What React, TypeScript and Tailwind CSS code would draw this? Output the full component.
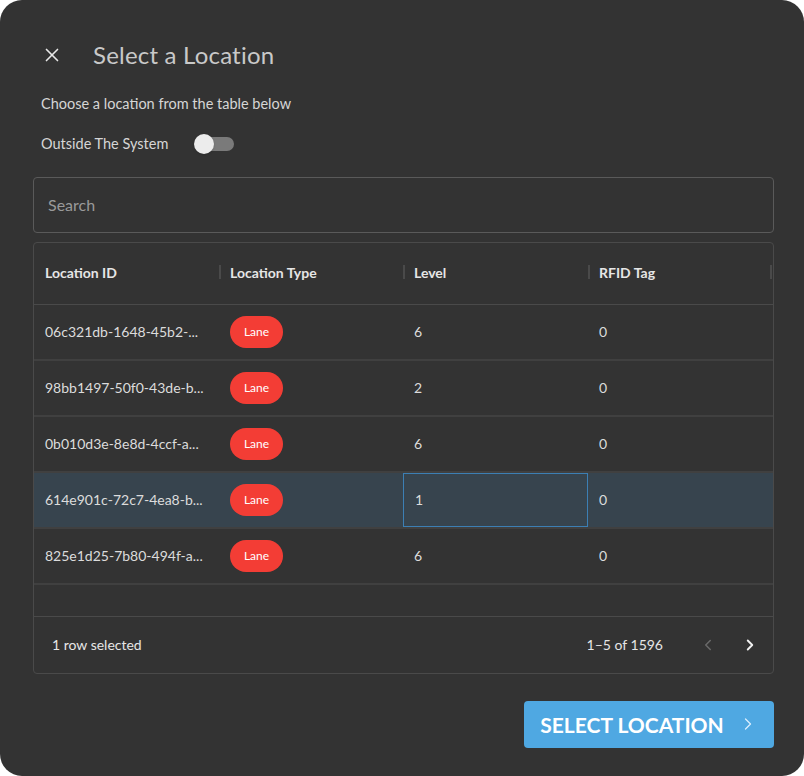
import { X, ChevronLeft, ChevronRight } from 'lucide-react';

type Row = { id: string; type: string; level: string; rfid: string };

const rows: Row[] = [
  { id: '06c321db-1648-45b2-...', type: 'Lane', level: '6', rfid: '0' },
  { id: '98bb1497-50f0-43de-b...', type: 'Lane', level: '2', rfid: '0' },
  { id: '0b010d3e-8e8d-4ccf-a...', type: 'Lane', level: '6', rfid: '0' },
  { id: '614e901c-72c7-4ea8-b...', type: 'Lane', level: '1', rfid: '0' },
  { id: '825e1d25-7b80-494f-a...', type: 'Lane', level: '6', rfid: '0' },
];

const SELECTED = 3;

function HeaderCell({ label, first }: { label: string; first?: boolean }) {
  return (
    <div className="relative flex items-center h-full px-[11px] pb-[2px]">
      {!first && <span className="absolute left-0 top-[22px] h-[14px] w-[2px] bg-[#4a4a4a]" />}
      <span className="text-[14px] font-bold text-[#e6e6e6]">{label}</span>
    </div>
  );
}

export default function App() {
  return (
    <div className="w-[804px] h-[776px] bg-white" style={{ fontFamily: 'Lato, "Noto Sans", sans-serif' }}>
      <div className="w-full h-full rounded-[22px] bg-[#333333] pl-[33px] pr-[30px] pt-[38px] flex flex-col">
        <div className="flex items-center h-[34px] pl-[8px]">
          <X className="w-[22px] h-[22px] text-[#e8e8e8]" strokeWidth={1.8} />
          <h1 className="ml-[30px] text-[24px] text-[#c9c9c9] tracking-[0.2px]">Select a Location</h1>
        </div>
        <p className="mt-[21px] pl-[8px] text-[14.5px] text-[#d6d6d6]">Choose a location from the table below</p>
        <div className="mt-[18px] pl-[8px] flex items-center h-[22px]">
          <span className="text-[14.5px] text-[#d6d6d6]">Outside The System</span>
          <div className="relative ml-[26px] w-[41px] h-[20px] flex items-center">
            <div className="ml-[6px] w-[34px] h-[14px] rounded-full bg-[#7a7a7a]" />
            <div className="absolute left-0 top-0 w-[20px] h-[20px] rounded-full bg-[#ececec] shadow" />
          </div>
        </div>
        <div className="mt-[22px] h-[56px] rounded-[4px] border border-[#5a5a5a] flex items-center px-[14px]">
          <span className="text-[16px] text-[#9a9a9a]">Search</span>
        </div>
        <div className="mt-[9px] h-[432px] rounded-[4px] border border-[#4a4a4a] flex flex-col">
          <div className="grid grid-cols-[185px_184px_185px_184px] h-[62px] border-b border-[#4a4a4a] relative">
            <HeaderCell label="Location ID" first />
            <HeaderCell label="Location Type" />
            <HeaderCell label="Level" />
            <HeaderCell label="RFID Tag" />
            <span className="absolute right-[1px] top-[22px] h-[14px] w-[2px] bg-[#4a4a4a]" />
          </div>
          {rows.map((r, i) => (
            <div
              key={r.id}
              className={`grid grid-cols-[185px_184px_185px_184px] h-[56px] border-b-2 border-[#404040] text-[14px] text-[#dcdcdc] ${
                i === SELECTED ? 'bg-[#37444e]' : ''
              }`}
            >
              <div className="flex items-center px-[11px] whitespace-nowrap">{r.id}</div>
              <div className="flex items-center px-[11px]">
                <span className="h-[32px] w-[53px] rounded-full bg-[#f33d35] text-white text-[12px] flex items-center justify-center">
                  {r.type}
                </span>
              </div>
              <div
                className={`flex items-center px-[11px] ${
                  i === SELECTED ? 'border border-[#3c7fb4]' : ''
                }`}
              >
                {r.level}
              </div>
              <div className="flex items-center px-[11px]">{r.rfid}</div>
            </div>
          ))}
          <div className="flex-1 border-b border-[#4a4a4a]" />
          <div className="h-[56px] flex items-center pl-[18px] pr-[14px] text-[14px] text-[#e6e6e6]">
            <span>1 row selected</span>
            <span className="ml-auto">1–5 of 1596</span>
            <ChevronLeft className="ml-[36px] w-[18px] h-[18px] text-[#6a6a6a]" />
            <ChevronRight className="ml-[24px] w-[18px] h-[18px] text-[#f0f0f0]" strokeWidth={2.5} />
          </div>
        </div>
        <div className="mt-[27px] flex justify-end">
          <button className="h-[47px] w-[250px] rounded-[4px] bg-[#4fa8e2] text-white flex items-center justify-center gap-[14px]">
            <span className="text-[21px] font-bold tracking-[0px]">SELECT LOCATION</span>
            <ChevronRight className="w-[20px] h-[20px] text-[#dcefff]" strokeWidth={1.5} />
          </button>
        </div>
      </div>
    </div>
  );
}
